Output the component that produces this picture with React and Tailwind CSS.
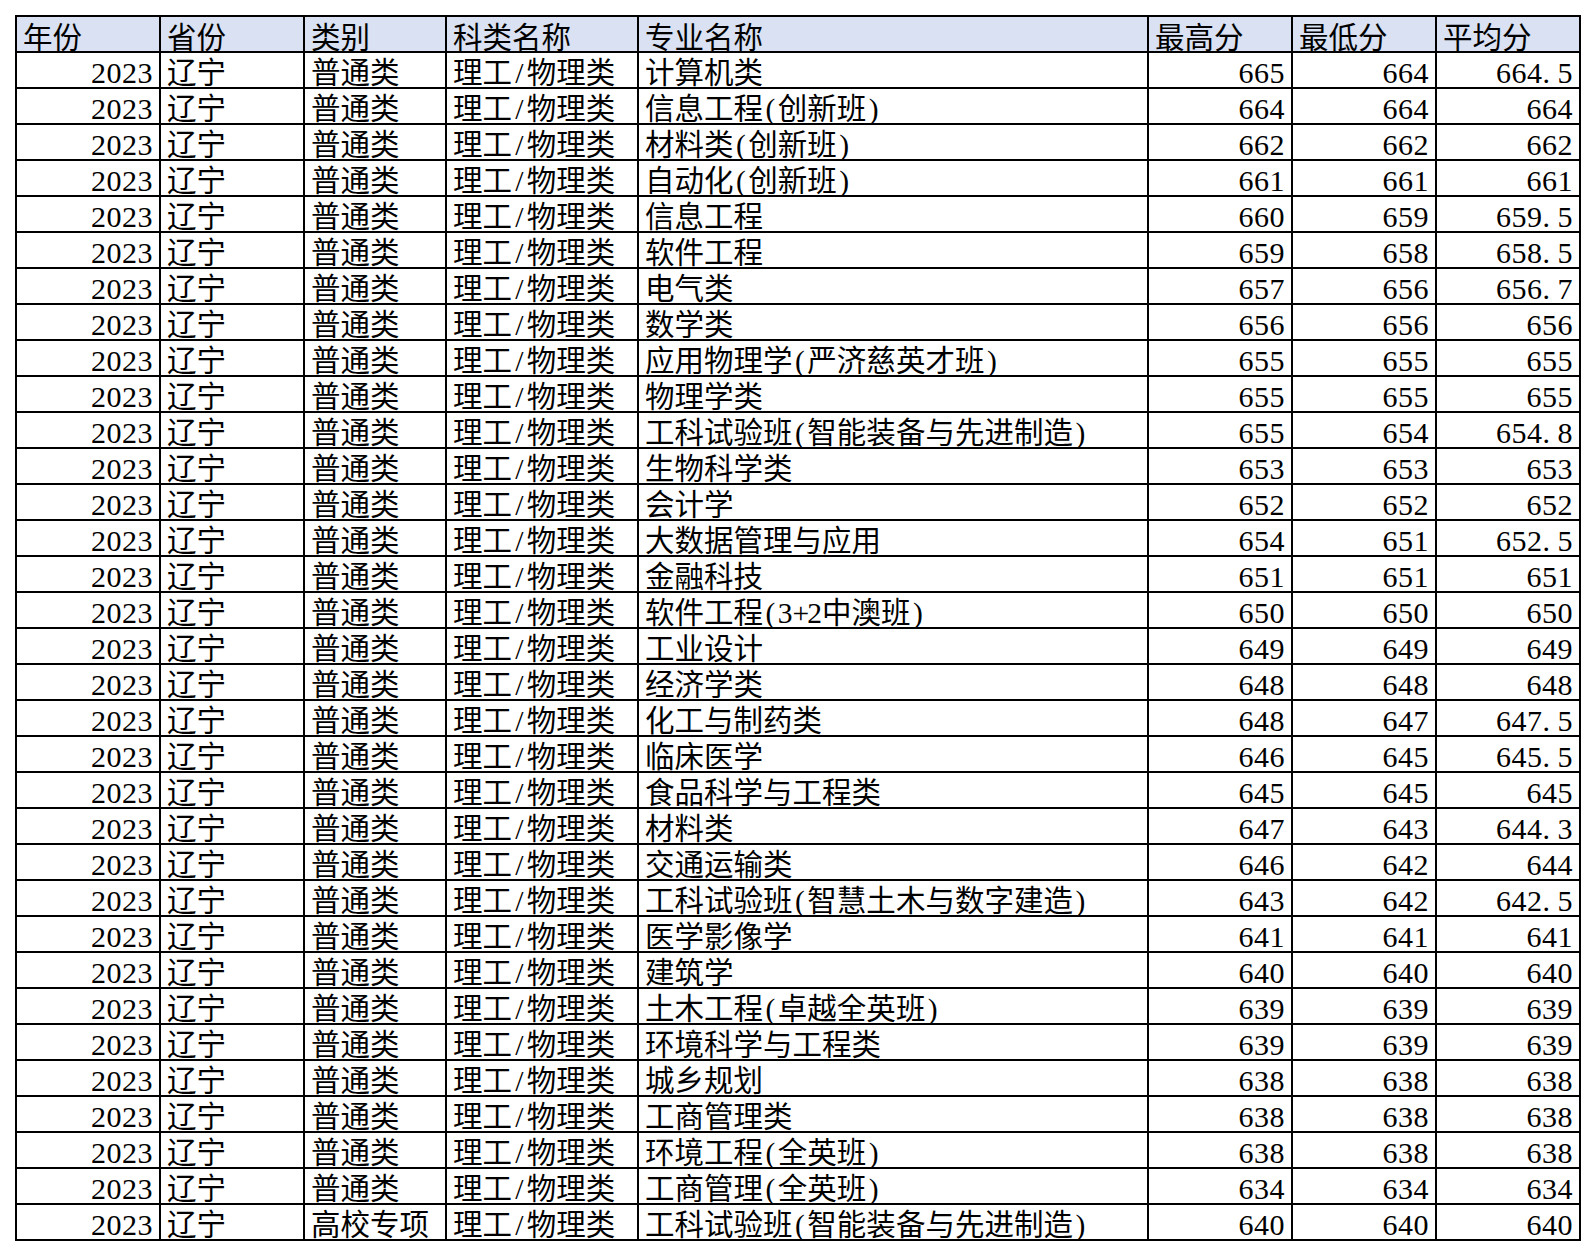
const rows = [
    ["普通类", "计算机类", "665", "664", "664.5"],
    ["普通类", "信息工程(创新班)", "664", "664", "664"],
    ["普通类", "材料类(创新班)", "662", "662", "662"],
    ["普通类", "自动化(创新班)", "661", "661", "661"],
    ["普通类", "信息工程", "660", "659", "659.5"],
    ["普通类", "软件工程", "659", "658", "658.5"],
    ["普通类", "电气类", "657", "656", "656.7"],
    ["普通类", "数学类", "656", "656", "656"],
    ["普通类", "应用物理学(严济慈英才班)", "655", "655", "655"],
    ["普通类", "物理学类", "655", "655", "655"],
    ["普通类", "工科试验班(智能装备与先进制造)", "655", "654", "654.8"],
    ["普通类", "生物科学类", "653", "653", "653"],
    ["普通类", "会计学", "652", "652", "652"],
    ["普通类", "大数据管理与应用", "654", "651", "652.5"],
    ["普通类", "金融科技", "651", "651", "651"],
    ["普通类", "软件工程(3+2中澳班)", "650", "650", "650"],
    ["普通类", "工业设计", "649", "649", "649"],
    ["普通类", "经济学类", "648", "648", "648"],
    ["普通类", "化工与制药类", "648", "647", "647.5"],
    ["普通类", "临床医学", "646", "645", "645.5"],
    ["普通类", "食品科学与工程类", "645", "645", "645"],
    ["普通类", "材料类", "647", "643", "644.3"],
    ["普通类", "交通运输类", "646", "642", "644"],
    ["普通类", "工科试验班(智慧土木与数字建造)", "643", "642", "642.5"],
    ["普通类", "医学影像学", "641", "641", "641"],
    ["普通类", "建筑学", "640", "640", "640"],
    ["普通类", "土木工程(卓越全英班)", "639", "639", "639"],
    ["普通类", "环境科学与工程类", "639", "639", "639"],
    ["普通类", "城乡规划", "638", "638", "638"],
    ["普通类", "工商管理类", "638", "638", "638"],
    ["普通类", "环境工程(全英班)", "638", "638", "638"],
    ["普通类", "工商管理(全英班)", "634", "634", "634"],
    ["高校专项", "工科试验班(智能装备与先进制造)", "640", "640", "640"],
];

const headers = ["年份", "省份", "类别", "科类名称", "专业名称", "最高分", "最低分", "平均分"];

// SimSun draws ASCII half-width: give each latin char a 0.5em slot
function Han({ text }) {
    return [...text].map((ch, i) =>
        ch.charCodeAt(0) < 128
            ? <span key={i} className="inline-block w-[0.5em] text-center">{ch}</span>
            : ch
    );
}

function Num({ value }) {
    const [a, b] = value.split(".");
    return (
        <span className="text-[30px] leading-[28px] tracking-[0.5px]">
            {a}
            {b !== undefined && (
                <>
                    <span className="inline-block w-[0.5em] text-left">.</span>
                    {b}
                </>
            )}
        </span>
    );
}

function TextCell({ text }) {
    return (
        <div className="bg-white flex items-end pl-[6px] whitespace-nowrap">
            <span className="text-[29.5px] leading-[28px]"><Han text={text} /></span>
        </div>
    );
}

function NumCell({ value }) {
    return (
        <div className="bg-white flex items-end justify-end pr-[6px] whitespace-nowrap">
            <Num value={value} />
        </div>
    );
}

export default function App() {
    return (
        <div className="min-h-[1256px] bg-white pl-[15px] pt-[15px] text-black font-['Liberation_Serif','Noto_Sans_CJK_SC',serif]">
            <div className="inline-grid grid-cols-[142px_142px_140px_190px_508px_142px_142px_142px] auto-rows-[34px] gap-[2px] p-[2px] bg-black">
                {headers.map(h => (
                    <div key={h} className="bg-[#d9e1f2] flex items-end pl-[6px] whitespace-nowrap">
                        <span className="text-[29.5px] leading-[26px]">{h}</span>
                    </div>
                ))}
                {rows.map((r, i) => (
                    <div key={i} className="contents">
                        <NumCell value="2023" />
                        <TextCell text="辽宁" />
                        <TextCell text={r[0]} />
                        <TextCell text="理工/物理类" />
                        <TextCell text={r[1]} />
                        <NumCell value={r[2]} />
                        <NumCell value={r[3]} />
                        <NumCell value={r[4]} />
                    </div>
                ))}
            </div>
        </div>
    );
}
